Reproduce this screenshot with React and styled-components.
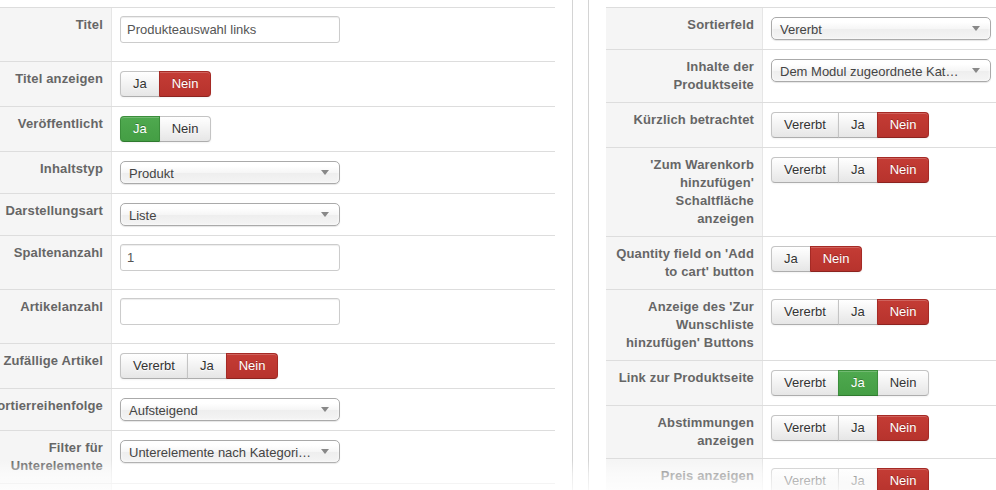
import React from 'react';
import styled, { createGlobalStyle, css } from 'styled-components';

const GlobalStyle = createGlobalStyle`
  html, body {
    margin: 0;
    padding: 0;
    background: #fff;
    overflow: hidden;
  }
  body {
    font-family: "Liberation Sans", Arial, sans-serif;
    font-size: 13px;
    line-height: 18px;
    color: #333;
  }
`;

const Page = styled.div`
  position: relative;
  display: flex;
  align-items: stretch;
  height: 490px;
  padding-top: 7px;
  box-sizing: border-box;
  overflow: hidden;
`;

const Column = styled.div`
  flex: 0 0 600px;
  margin-left: ${p => (p.$first ? '-45px' : '0')};
`;

const Divider = styled.div`
  flex: 0 0 15px;
  margin: -7px 17px 0 17px;
  border-left: 1px solid #d4d4d4;
  border-right: 1px solid #d4d4d4;
`;

const Row = styled.div`
  display: grid;
  grid-template-columns: 157px 1fr;
  border-top: 1px solid #ddd;
`;

const Label = styled.div`
  background: #f5f5f5;
  border-right: 1px solid #e6e6e6;
  padding: 8px 8px 8px 8px;
  text-align: right;
  font-weight: bold;
  letter-spacing: 0.15px;
  color: #666;
  white-space: pre-line;
`;

const Control = styled.div`
  padding: 9px 8px;
`;

const TextInput = styled.input`
  display: block;
  box-sizing: border-box;
  width: 220px;
  height: 27px;
  margin: -1px 0 9px;
  padding: 4px 6px;
  border: 1px solid #ccc;
  border-radius: 3px;
  box-shadow: inset 0 1px 1px rgba(0, 0, 0, 0.075);
  font: 13px/18px "Liberation Sans", Arial, sans-serif;
  color: #555;
  background: #fff;
  outline: none;
`;

const Select = styled.div`
  position: relative;
  box-sizing: border-box;
  width: 220px;
  height: 23px;
  padding: 0 24px 0 8px;
  border: 1px solid #aaa;
  border-radius: 5px;
  background: linear-gradient(#fff 20%, #f6f6f6 50%, #eee 52%, #f4f4f4 100%);
  box-shadow: inset 0 0 3px #fff, 0 1px 1px rgba(0, 0, 0, 0.1);
  color: #444;
  line-height: 23px;
  white-space: nowrap;
  overflow: hidden;
  text-overflow: ellipsis;
`;

const Caret = styled.svg`
  position: absolute;
  right: 10px;
  top: 8px;
`;

const Group = styled.div`
  display: inline-flex;
`;

const tones = {
  danger: css`
    background: linear-gradient(#c43c35, #b7332d);
    border-color: #a52a25 #a52a25 #8c231f;
    color: #fff;
    text-shadow: 0 -1px 0 rgba(0, 0, 0, 0.25);
  `,
  success: css`
    background: linear-gradient(#4fa94f, #449e44);
    border-color: #3b8e3b #3b8e3b #2f7a2f;
    color: #fff;
    text-shadow: 0 -1px 0 rgba(0, 0, 0, 0.25);
  `,
  plain: css`
    background: linear-gradient(#fff, #e6e6e6);
    border-color: #c4c4c4 #c4c4c4 #adadad;
    color: #333;
    text-shadow: 0 1px 1px rgba(255, 255, 255, 0.75);
  `,
};

const Btn = styled.span`
  position: relative;
  display: inline-block;
  padding: 3px 12px;
  line-height: 18px;
  border: 1px solid;
  box-shadow: inset 0 1px 0 rgba(255, 255, 255, 0.2), 0 1px 2px rgba(0, 0, 0, 0.05);
  ${p => tones[p.$tone]};
  & + & {
    margin-left: -1px;
  }
  &:first-child {
    border-radius: 4px 0 0 4px;
  }
  &:last-child {
    border-radius: 0 4px 4px 0;
  }
  z-index: ${p => (p.$tone === 'plain' ? 0 : 1)};
`;

// soft white fade over the lower edge of the form
const Fade = styled.div`
  position: absolute;
  left: 0;
  right: 0;
  bottom: 0;
  height: 30px;
  background: linear-gradient(
    rgba(255, 255, 255, 0),
    rgba(255, 255, 255, 0.5) 45%,
    rgba(255, 255, 255, 0.8)
  );
  pointer-events: none;
`;

const Dropdown = ({ value }) => (
  <Select>
    {value}
    <Caret width="8" height="5" viewBox="0 0 8 5">
      <path d="M0 0h8L4 5z" fill="#888" />
    </Caret>
  </Select>
);

const Toggle = ({ options, active }) => (
  <Group>
    {options.map(o => {
      let tone = 'plain';
      if (o === active) tone = o === 'Ja' ? 'success' : 'danger';
      return (
        <Btn key={o} $tone={tone}>
          {o}
        </Btn>
      );
    })}
  </Group>
);

const renderField = f => {
  if (f.type === 'text') return <TextInput readOnly value={f.value} />;
  if (f.type === 'select') return <Dropdown value={f.value} />;
  return <Toggle options={f.options} active={f.active} />;
};

const VJN = ['Vererbt', 'Ja', 'Nein'];
const JN = ['Ja', 'Nein'];

const leftFields = [
  { label: 'Titel', type: 'text', value: 'Produkteauswahl links' },
  { label: 'Titel anzeigen', type: 'toggle', options: JN, active: 'Nein' },
  { label: 'Veröffentlicht', type: 'toggle', options: JN, active: 'Ja' },
  { label: 'Inhaltstyp', type: 'select', value: 'Produkt' },
  { label: 'Darstellungsart', type: 'select', value: 'Liste' },
  { label: 'Spaltenanzahl', type: 'text', value: '1' },
  { label: 'Artikelanzahl', type: 'text', value: '' },
  { label: 'Zufällige Artikel', type: 'toggle', options: VJN, active: 'Nein' },
  { label: 'Sortierreihenfolge', type: 'select', value: 'Aufsteigend' },
  { label: 'Filter für\nUnterelemente', type: 'select', value: 'Unterelemente nach Kategori…' },
  { label: 'Kategorien', type: 'select', value: 'Alle' },
];

const rightFields = [
  { label: 'Sortierfeld', type: 'select', value: 'Vererbt' },
  { label: 'Inhalte der\nProduktseite', type: 'select', value: 'Dem Modul zugeordnete Kat…' },
  { label: 'Kürzlich betrachtet', type: 'toggle', options: VJN, active: 'Nein' },
  {
    label: "'Zum Warenkorb\nhinzufügen'\nSchaltfläche\nanzeigen",
    type: 'toggle',
    options: VJN,
    active: 'Nein',
  },
  { label: "Quantity field on 'Add\nto cart' button", type: 'toggle', options: JN, active: 'Nein' },
  {
    label: "Anzeige des 'Zur\nWunschliste\nhinzufügen' Buttons",
    type: 'toggle',
    options: VJN,
    active: 'Nein',
  },
  { label: 'Link zur Produktseite', type: 'toggle', options: VJN, active: 'Ja' },
  { label: 'Abstimmungen\nanzeigen', type: 'toggle', options: VJN, active: 'Nein' },
  { label: 'Preis anzeigen', type: 'toggle', options: VJN, active: 'Nein' },
];

const FieldList = ({ fields }) =>
  fields.map(f => (
    <Row key={f.label}>
      <Label>{f.label}</Label>
      <Control>{renderField(f)}</Control>
    </Row>
  ));

export default function App() {
  return (
    <>
      <GlobalStyle />
      <Page>
        <Column $first>
          <FieldList fields={leftFields} />
        </Column>
        <Divider />
        <Column>
          <FieldList fields={rightFields} />
        </Column>
        <Fade />
      </Page>
    </>
  );
}
